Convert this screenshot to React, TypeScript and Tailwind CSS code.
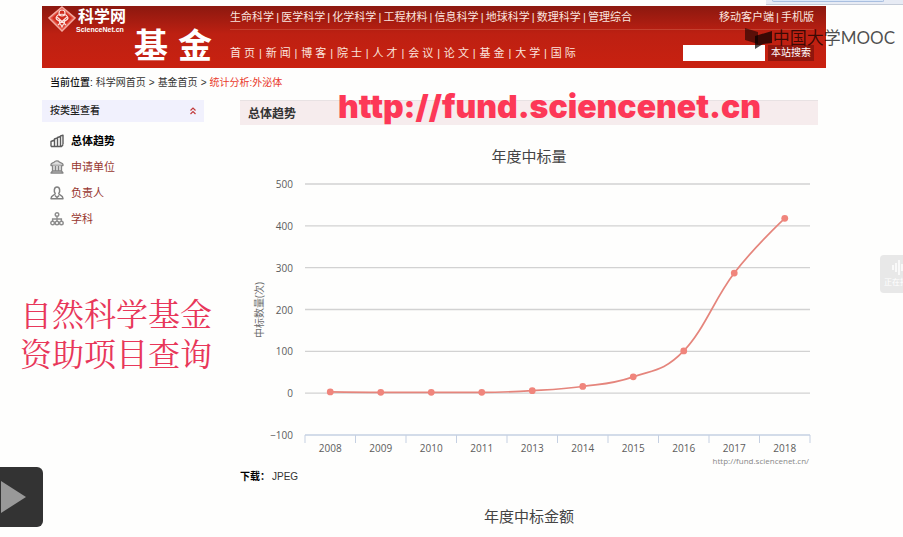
import { Fragment } from "react";

const topics = ["生命科学", "医学科学", "化学科学", "工程材料", "信息科学", "地球科学", "数理科学", "管理综合"];
const sections = ["首 页", "新 闻", "博 客", "院 士", "人 才", "会 议", "论 文", "基 金", "大 学", "国 际"];

const yearly = [
  { year: "2008", count: 3 },
  { year: "2009", count: 2 },
  { year: "2010", count: 2 },
  { year: "2011", count: 2 },
  { year: "2013", count: 6 },
  { year: "2014", count: 16 },
  { year: "2015", count: 39 },
  { year: "2016", count: 101 },
  { year: "2017", count: 287 },
  { year: "2018", count: 418 },
];
const ticks = [500, 400, 300, 200, 100, 0, -100];
const LEFT = 65;
const RIGHT = 570;
const TOP = 49;
const STEP = (RIGHT - LEFT) / yearly.length;
const yOf = (v: number) => TOP + ((500 - v) / 600) * 251;
const points = yearly.map((d, i) => ({ x: LEFT + STEP * (i + 0.5), y: yOf(d.count) }));

type Pt = { x: number; y: number };

// Cubic spline whose control points never overshoot the neighbouring values.
function spline(pts: Pt[]) {
  let d = `M${pts[0].x} ${pts[0].y}`;
  let prev: Pt = pts[0];
  for (let i = 1; i < pts.length; i++) {
    const p = pts[i];
    let left: Pt = p;
    let right: Pt = p;
    if (i < pts.length - 1) {
      const a = pts[i - 1];
      const b = pts[i + 1];
      const lx = (1.5 * p.x + a.x) / 2.5;
      const rx = (1.5 * p.x + b.x) / 2.5;
      let ly = (1.5 * p.y + a.y) / 2.5;
      let ry = (1.5 * p.y + b.y) / 2.5;
      const fix = ((ry - ly) * (rx - p.x)) / (rx - lx) + p.y - ry;
      ly += fix;
      ry += fix;
      if (ly > a.y && ly > p.y) {
        ly = Math.max(a.y, p.y);
        ry = 2 * p.y - ly;
      } else if (ly < a.y && ly < p.y) {
        ly = Math.min(a.y, p.y);
        ry = 2 * p.y - ly;
      }
      if (ry > b.y && ry > p.y) {
        ry = Math.max(b.y, p.y);
        ly = 2 * p.y - ry;
      } else if (ry < b.y && ry < p.y) {
        ry = Math.min(b.y, p.y);
        ly = 2 * p.y - ry;
      }
      left = { x: lx, y: ly };
      right = { x: rx, y: ry };
    }
    d += ` C${prev.x} ${prev.y} ${left.x} ${left.y} ${p.x} ${p.y}`;
    prev = right;
  }
  return d;
}

function LinkRow({ items, className }: { items: string[]; className: string }) {
  return (
    <nav className={`flex items-center justify-between whitespace-pre ${className}`}>
      {items.map((t, i) => (
        <Fragment key={t}>
          {i > 0 && <span>|</span>}
          <a href="#">{t}</a>
        </Fragment>
      ))}
    </nav>
  );
}

function TrendIcon() {
  return (
    <svg viewBox="0 0 14 14" className="size-3.5" fill="none" stroke="#5c5c5c" strokeWidth="1.4" strokeLinejoin="round">
      <path d="M1 12.5V7.5L4.5 6V12.5M4.5 12.5V5L7.5 3.8V12.5M7.5 12.5V3.5L10.5 2.5V12.5M10.5 10V2L13 1.2V10.5M1 12.5H11.5L13 10.8" />
    </svg>
  );
}
function BankIcon() {
  return (
    <svg viewBox="0 0 14 14" className="size-3.5" fill="#dedede" stroke="#858585" strokeWidth="1.3" strokeLinejoin="round">
      <path d="M1 4.5C1 3 3 3 4 2.2C5.5.8 8 .4 9.3 2C10.5 3 13 2.8 13 4.5V5.5H1Z" />
      <path d="M2.5 5.5V11H11.5V5.5M5.5 6V11M8.5 6V11M2.5 11H11.5L13 13H1Z" />
    </svg>
  );
}
function PersonIcon() {
  return (
    <svg viewBox="0 0 14 14" className="size-3.5" fill="none" stroke="#808080" strokeWidth="1.5" strokeLinejoin="round">
      <path d="M5.2 7.5C3.8 6 3.8 1 7 1S10.2 6 8.8 7.5C9 9.5 13 9 13 12.8H1C1 9 5 9.5 5.2 7.5ZM5 9.5L7 11.5L9 9.5" />
    </svg>
  );
}
function TreeIcon() {
  return (
    <svg viewBox="0 0 14 14" className="size-3.5" fill="none" stroke="#8c8c8c" strokeWidth="1.4">
      <circle cx="7" cy="2.5" r="1.8" />
      <circle cx="2.6" cy="11" r="1.8" />
      <circle cx="7" cy="11" r="1.8" />
      <circle cx="11.4" cy="11" r="1.8" />
      <path d="M7 4.3V9.2M2.6 9V7H11.4V9" />
    </svg>
  );
}

const menu = [
  { label: "总体趋势", Icon: TrendIcon, active: true },
  { label: "申请单位", Icon: BankIcon, active: false },
  { label: "负责人", Icon: PersonIcon, active: false },
  { label: "学科", Icon: TreeIcon, active: false },
];

function TrendChart() {
  return (
    <svg viewBox="0 0 578 334" className="block w-full font-['Open_Sans','Noto_Sans_CJK_SC',sans-serif]" role="img" aria-label="年度中标量">
      <text x="289" y="27" textAnchor="middle" fontSize="15" fill="#444">年度中标量</text>
      {ticks.map((t) => (
        <g key={t}>
          <path d={`M${LEFT} ${yOf(t)}H${RIGHT}`} stroke={t === -100 ? "#c5d0e2" : "#d2d2d2"} strokeWidth="1.3" />
          <text x="53" y={yOf(t) + 4} textAnchor="end" fontSize="10" fill="#5c5c5c">{t < 0 ? `−${-t}` : t}</text>
        </g>
      ))}
      {Array.from({ length: yearly.length + 1 }, (_, i) => (
        <path key={i} d={`M${LEFT + i * STEP} 300v8`} stroke="#c5d0e2" />
      ))}
      <text transform="translate(23 175) rotate(-90)" textAnchor="middle" fontSize="10" fill="#6c6c6c">中标数量(次)</text>
      <path d={spline(points)} fill="none" stroke="#e5857c" strokeWidth="1.7" />
      {points.map((p, i) => (
        <g key={yearly[i].year}>
          <circle cx={p.x} cy={p.y} r="3.4" fill="#f0857c" />
          <text x={p.x} y="317" textAnchor="middle" fontSize="10" fill="#5c5c5c">{yearly[i].year}</text>
        </g>
      ))}
      <text x="569" y="329" textAnchor="end" fontSize="8" fill="#888">http://fund.sciencenet.cn/</text>
    </svg>
  );
}

export default function App() {
  return (
    <div className="relative min-h-screen overflow-hidden bg-[#fefefd] pt-1.5 font-['Liberation_Sans','Noto_Sans_CJK_SC',sans-serif] text-[11px] leading-4 text-[#333]">
      <div className="absolute top-0 right-0 h-[5px] w-[137px] border-b border-[#c5ccd8] bg-[#e7ebf4] pl-1.5">
        <div className="h-0.5 w-28 rounded-b-sm border-x border-b border-[#a9bfe0] bg-[#dce8f8]" />
      </div>

      <div className="mr-[77px] ml-[42px]">
        <header className="flex h-[62px] bg-linear-to-b from-[#8c180f] via-[#bd2012] via-45% to-[#c92110] text-[#fbe4df]">
          <div className="flex w-[188px] shrink-0 pl-1.5">
            <svg viewBox="0 0 28 28" className="size-7 shrink-0">
              <path d="M14 1L27 12L14 25L1 12Z" fill="#e65445" stroke="#f4aaa0" strokeWidth="1.5" />
              <path d="M14 3L24 12L14 22L4 12Z" fill="#cf2c1e" />
              <g fill="none" stroke="#fbe3df" strokeWidth="1.2">
                <circle cx="14" cy="7" r="3" />
                <path d="M8 12C9 7 19 7 20 12C19 16 9 16 8 12M9 11L18 19M19 11L10 19M11 15L14 21L17 15" />
              </g>
            </svg>
            <div className="flex flex-col text-white">
              <span className="pt-0.5 pl-0.5 text-base leading-[18px] font-bold">科学网</span>
              <span className="text-[7px] leading-2 font-bold">ScienceNet.cn</span>
            </div>
            <h1 className="ml-2 flex gap-2.5 self-end pb-0.5 text-[34px] leading-10 font-bold text-white">
              <span>基</span>
              <span>金</span>
            </h1>
          </div>
          <div className="flex min-w-0 grow flex-col pr-3">
            <div className="flex h-6 items-center justify-between border-b border-[#c4402f] pb-0.5">
              <LinkRow items={topics} className="w-[402px]" />
              <LinkRow items={["移动客户端", "手机版"]} className="w-[95px]" />
            </div>
            <div className="flex grow items-center justify-between pt-3 pb-1">
              <LinkRow items={sections} className="w-[346px]" />
              <form className="flex items-center gap-[3px]">
                <input aria-label="本站搜索" className="h-4 w-[82px] bg-white" />
                <button type="button" className="h-4 w-[46px] bg-[#8f160d] text-[10px] text-white">本站搜索</button>
              </form>
            </div>
          </div>
        </header>

        <nav className="flex h-8 items-center gap-[3px] pb-0.5 pl-2 text-[10px]">
          <span className="font-medium text-[#111]">当前位置:</span>
          <a href="#">科学网首页</a>
          <span>&gt;</span>
          <a href="#">基金首页</a>
          <span>&gt;</span>
          <a href="#" className="text-[#e93a2c]">统计分析:外泌体</a>
        </nav>

        <div className="flex gap-9">
          <aside className="w-[162px] shrink-0">
            <h2 className="flex h-[22px] items-center justify-between bg-[#f1f1fd] px-2 text-[10px] font-medium text-[#222]">
              按类型查看
              <svg viewBox="0 0 6 8" className="h-2 w-1.5" fill="none" stroke="#c23a3a" strokeWidth="1.2">
                <path d="M.5 3.5L3 1L5.5 3.5M.5 7L3 4.5L5.5 7" />
              </svg>
            </h2>
            <ul className="pt-1.5 pl-2">
              {menu.map(({ label, Icon, active }) => (
                <li key={label} className="flex h-[26px] items-center gap-[7px]">
                  <Icon />
                  <a href="#" className={active ? "font-bold text-black" : "text-[#98362f]"}>{label}</a>
                </li>
              ))}
            </ul>
          </aside>

          <main className="mr-2 min-w-0 grow">
            <h2 className="flex h-[25px] items-center border-t border-[#e8e2e3] bg-[#f6eced] px-2 pt-0.5 text-xs font-bold text-[#333]">总体趋势</h2>
            <div className="pt-2.5">
              <TrendChart />
            </div>
            <p className="flex gap-0.5 text-[10px]">
              <b className="text-black">下载：</b>
              <a href="#">JPEG</a>
            </p>
            <h3 className="pt-5 text-center text-[15px] leading-6 text-[#444]">年度中标金额</h3>
          </main>
        </div>
      </div>

      <p className="absolute top-[87px] left-[338px] font-[Inter,sans-serif] text-[32px] leading-10 font-black whitespace-nowrap text-[#fd3857]">
        http://fund.sciencenet.cn
      </p>
      <div className="absolute top-[292px] left-5 font-['Noto_Serif_CJK_SC','Noto_Sans_CJK_SC',serif] text-[32px] leading-10 whitespace-nowrap text-[#e8375a]">
        <p>自然科学基金</p>
        <p>资助项目查询</p>
      </div>

      <div className="absolute top-[26px] right-2 flex items-center gap-px text-black/70">
        <svg viewBox="0 0 27 24" className="h-6 w-[27px]" fill="currentColor">
          <path d="M0 2L13 6V18L0 14Z" opacity=".75" />
          <path d="M10 10L27 5V17L18 18L10 23Z" />
        </svg>
        <span className="font-[Lato,'Noto_Sans_CJK_SC',sans-serif] text-[17px] leading-6 whitespace-nowrap">中国大学MOOC</span>
      </div>

      <div className="absolute top-[255px] right-0 flex h-[38px] w-[23px] flex-col overflow-hidden rounded-l-sm bg-[#e8e8e8] pt-1 pl-1 text-[8px] whitespace-nowrap text-white">
        <svg viewBox="0 0 20 16" className="ml-2 h-4 w-5 shrink-0" stroke="#fff" strokeWidth="1.5">
          <path d="M1 6V11M4 4V13M7 1V16M10 5V12" />
        </svg>
        正在播放
      </div>

      <button type="button" aria-label="播放" className="absolute top-[467px] left-0 flex h-[60px] w-[43px] items-center rounded-r-md bg-[#333]">
        <svg viewBox="0 0 25 32" className="ml-px h-8 w-[25px]" fill="#999">
          <path d="M0 0L25 16L0 32Z" />
        </svg>
      </button>
    </div>
  );
}
